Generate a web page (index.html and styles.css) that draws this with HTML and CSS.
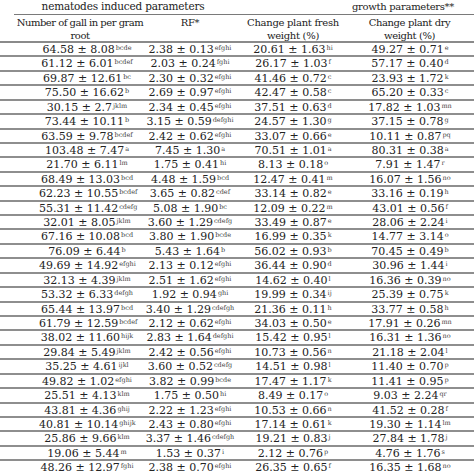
FILE: index.html
```html
<!DOCTYPE html>
<html>
<head>
<meta charset="utf-8">
<link rel="stylesheet" href="styles.css">
</head>
<body>
<div class="table">
  <div class="groups">
    <div class="group g1">nematodes induced parameters</div>
    <div class="group g2">growth parameters**</div>
  </div>
  <div class="row head">
    <div class="pad"></div>
    <div class="cell h1"><span>Number of gall in per gram</span><span>root</span></div>
    <div class="cell h2"><span>RF*</span></div>
    <div class="cell h3"><span>Change plant fresh</span><span>weight (%)</span></div>
    <div class="cell h4"><span>Change plant dry</span><span>weight (%)</span></div>
  </div>
  <div id="body"></div>
</div>
<script src="app.js"></script>
</body>
</html>
```

FILE: app.js
```js
var data = [
["64.58 ± 8.08","bcde","2.38 ± 0.13","efghi","20.61 ± 1.63","hi","49.27 ± 0.71","e"],
["61.12 ± 6.01","bcdef","2.03 ± 0.24","fghi","26.17 ± 1.03","f","57.17 ± 0.40","d"],
["69.87 ± 12.61","bc","2.30 ± 0.32","efghi","41.46 ± 0.72","c","23.93 ± 1.72","k"],
["75.50 ± 16.62","b","2.69 ± 0.97","efghi","42.47 ± 0.58","c","65.20 ± 0.33","c"],
["30.15 ± 2.7","jklm","2.34 ± 0.45","efghi","37.51 ± 0.63","d","17.82 ± 1.03","mn"],
["73.44 ± 10.11","b","3.15 ± 0.59","defghi","24.57 ± 1.30","g","37.15 ± 0.78","g"],
["63.59 ± 9.78","bcdef","2.42 ± 0.62","efghi","33.07 ± 0.66","e","10.11 ± 0.87","pq"],
["103.48 ± 7.47","a","7.45 ± 1.30","a","70.51 ± 1.01","a","80.31 ± 0.38","a"],
["21.70 ± 6.11","lm","1.75 ± 0.41","hi","8.13 ± 0.18","o","7.91 ± 1.47","r"],
["68.49 ± 13.03","bcd","4.48 ± 1.59","bcd","12.47 ± 0.41","m","16.07 ± 1.56","no"],
["62.23 ± 10.55","bcdef","3.65 ± 0.82","cdef","33.14 ± 0.82","e","33.16 ± 0.19","h"],
["55.31 ± 11.42","cdefg","5.08 ± 1.90","bc","12.09 ± 0.22","m","43.01 ± 0.56","f"],
["32.01 ± 8.05","jklm","3.60 ± 1.29","cdefg","33.49 ± 0.87","e","28.06 ± 2.24","i"],
["67.16 ± 10.08","bcd","3.80 ± 1.90","bcde","16.99 ± 0.35","k","14.77 ± 3.14","o"],
["76.09 ± 6.44","b","5.43 ± 1.64","b","56.02 ± 0.93","b","70.45 ± 0.49","b"],
["49.69 ± 14.92","efghi","2.13 ± 0.12","efghi","36.44 ± 0.90","d","30.96 ± 1.44","i"],
["32.13 ± 4.39","jklm","2.51 ± 1.62","efghi","14.62 ± 0.40","l","16.36 ± 0.39","no"],
["53.32 ± 6.33","defgh","1.92 ± 0.94","ghi","19.99 ± 0.34","ij","25.39 ± 0.75","k"],
["65.44 ± 13.97","bcd","3.40 ± 1.29","cdefgh","21.36 ± 0.11","h","33.77 ± 0.58","h"],
["61.79 ± 12.59","bcdef","2.12 ± 0.62","efghi","34.03 ± 0.50","e","17.91 ± 0.26","mn"],
["38.02 ± 11.60","hijk","2.83 ± 1.64","defghi","15.42 ± 0.95","l","16.31 ± 1.36","no"],
["29.84 ± 5.49","jklm","2.42 ± 0.56","efghi","10.73 ± 0.56","n","21.18 ± 2.04","l"],
["35.25 ± 4.61","ijkl","3.60 ± 0.52","cdefg","14.51 ± 0.98","l","11.40 ± 0.70","p"],
["49.82 ± 1.02","efghi","3.82 ± 0.99","bcde","17.47 ± 1.17","k","11.41 ± 0.95","p"],
["25.51 ± 4.13","klm","1.75 ± 0.50","hi","8.49 ± 0.17","o","9.03 ± 2.24","qr"],
["43.81 ± 4.36","ghij","2.22 ± 1.23","efghi","10.53 ± 0.66","n","41.52 ± 0.28","f"],
["40.81 ± 10.14","ghijk","2.43 ± 0.80","efghi","17.14 ± 0.61","k","19.30 ± 1.14","lm"],
["25.86 ± 9.66","klm","3.37 ± 1.46","cdefgh","19.21 ± 0.83","j","27.84 ± 1.78","j"],
["19.06 ± 5.44","m","1.53 ± 0.37","i","2.12 ± 0.76","p","4.76 ± 1.76","s"],
["48.26 ± 12.97","fghi","2.38 ± 0.70","efghi","26.35 ± 0.65","f","16.35 ± 1.68","no"]
];
var body = document.getElementById("body");
data.forEach(function (r) {
  var row = document.createElement("div");
  row.className = "row data";
  var pad = document.createElement("div");
  pad.className = "pad";
  row.appendChild(pad);
  for (var i = 0; i < 8; i += 2) {
    var c = document.createElement("div");
    c.className = "cell c" + (i / 2 + 1);
    c.appendChild(document.createTextNode(r[i]));
    var s = document.createElement("sup");
    s.textContent = r[i + 1];
    c.appendChild(s);
    row.appendChild(c);
  }
  body.appendChild(row);
});
```

FILE: styles.css
```css
html, body {
  margin: 0;
  padding: 0;
  background: #ffffff;
  overflow: hidden;
}
body {
  width: 474px;
  height: 474px;
  font-family: "DejaVu Serif", "Liberation Serif", serif;
  font-size: 10.5px;
  color: #222222;
}
.table {
  width: 474px;
}
.groups {
  display: flex;
  margin-left: 14px;
  height: 14px;
  border-bottom: 1.5px solid #7a7a7a;
  line-height: 13px;
  letter-spacing: -0.2px;
}
.group {
  white-space: nowrap;
  text-align: center;
}
.g1 {
  width: 218px;
}
.g2 {
  flex: 1;
  padding-left: 100px;
  font-size: 10px;
  letter-spacing: -0.3px;
}
.row {
  display: grid;
  grid-template-columns: 25px 110px 110px 96px 133px;
}
.head {
  line-height: 13px;
  height: 28px;
  box-sizing: border-box;
  padding-top: 1px;
  border-bottom: 2px solid #8a8a8a;
  font-size: 10px;
}
.head .cell {
  display: flex;
  flex-direction: column;
  align-items: center;
  letter-spacing: -0.3px;
}
.head .h1 {
  letter-spacing: -0.5px;
}
.head .h4 {
  padding-left: 4px;
  letter-spacing: -0.4px;
}
.cell {
  text-align: center;
  white-space: nowrap;
}
.data {
  height: 14.43px;
  box-sizing: border-box;
  border-bottom: 2px solid #8e8e8e;
  line-height: 13px;
  font-size: 11px;
}
.data .c1 {
  padding-left: 14px;
}
.data .c4 {
  padding-left: 5px;
}
sup {
  font-size: 6.5px;
  vertical-align: 3px;
  line-height: 0;
  color: #444;
  margin-left: 1px;
}
```
